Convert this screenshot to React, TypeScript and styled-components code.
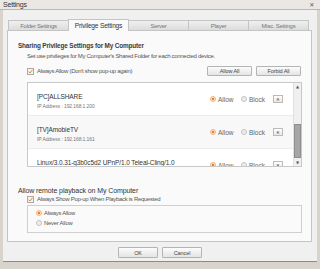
import * as React from 'react'
import styled, { createGlobalStyle } from 'styled-components'

const font = `"Liberation Sans", Arial, sans-serif`

const GlobalStyle = createGlobalStyle`
    html, body {
        margin: 0;
        padding: 0;
        background: #d9d4cb;
    }
    body {
        font-family: ${font};
        color: #444;
    }
`

interface Device {
    name: string
    ip?: string
}

const devices: Device[] = [
    { name: '[PC]ALLSHARE', ip: 'IP Address : 192.168.1.200' },
    { name: '[TV]AmobieTV', ip: 'IP Address : 192.168.1.161' },
    { name: 'Linux/3.0.31-g3b0c5d2 UPnP/1.0 Teleal-Cling/1.0' },
]

const tabs = ['Folder Settings', 'Privilege Settings', 'Server', 'Player', 'Misc. Settings']

const Window = styled.div`
    width: 320px;
    height: 269px;
    display: flex;
    flex-direction: column;
    background: #d9d4cb;
    overflow: hidden;
`

const TitleBar = styled.div`
    height: 9px;
    display: flex;
    align-items: center;
    justify-content: space-between;
    padding: 0 6px 0 3px;
    background: #ebe8e3;
    border-bottom: 1px solid #bdb7ad;
    font-size: 7px;
    letter-spacing: -0.2px;
    color: #333;
`

const Close = styled.span`
    font-family: "DejaVu Sans", sans-serif;
    font-size: 6px;
    color: #555;
`

const Frame = styled.div`
    width: 314px;
    height: 252px;
    margin-left: 3px;
    display: flex;
    flex-direction: column;
    padding: 8px 0 0 4px;
    box-sizing: border-box;
    background: #f0f0f0;
    border-bottom: 1px solid #8f8a81;
`

const TabBar = styled.div`
    display: flex;
    align-items: flex-end;
    height: 12px;
    margin-left: 1px;
`

const Tab = styled.div<{ $active?: boolean }>`
    width: 61px;
    height: ${(p) => (p.$active ? 12 : 10)}px;
    box-sizing: border-box;
    display: flex;
    align-items: center;
    justify-content: center;
    border: 1px solid #c4c4c4;
    border-bottom: none;
    margin-right: -1px;
    background: ${(p) =>
        p.$active ? '#fafafa' : 'linear-gradient(#f0f0f0, #dcdcdc)'};
    font-size: ${(p) => (p.$active ? 6.6 : 6)}px;
    letter-spacing: ${(p) => (p.$active ? -0.2 : -0.25)}px;
    color: ${(p) => (p.$active ? '#333' : '#777')};
    position: relative;
    z-index: ${(p) => (p.$active ? 1 : 0)};
    margin-bottom: ${(p) => (p.$active ? -1 : 0)}px;
`

const Panel = styled.div`
    width: 305px;
    height: 212px;
    box-sizing: border-box;
    padding: 10px 10px 0 10px;
    background: #fafafa;
    border: 1px solid #c4c4c4;
`

const Heading = styled.div`
    font-size: 6.4px;
    font-weight: bold;
    letter-spacing: -0.15px;
    color: #3a3a3a;
    line-height: 9px;
`

const SubText = styled.div`
    font-size: 6px;
    letter-spacing: -0.3px;
    line-height: 8px;
    margin: 2px 0 0 9px;
    color: #555;
`

const ActionRow = styled.div`
    display: flex;
    align-items: center;
    justify-content: space-between;
    margin: 6px 0 0 9px;
    height: 10px;
`

const CheckLabel = styled.label<{ $indent?: number }>`
    display: flex;
    align-items: center;
    gap: 3px;
    height: 8px;
    margin-left: ${(p) => p.$indent ?? 0}px;
    font-size: 6px;
    letter-spacing: -0.3px;
    color: #555;
`

const Box = styled.span`
    width: 5px;
    height: 5px;
    border: 1px solid #aaa;
    background: #f3f3f3;
    display: flex;
    align-items: center;
    justify-content: center;
`

const Buttons = styled.div`
    display: flex;
    gap: 4px;
`

const SmallButton = styled.button<{ $w: number; $h: number }>`
    width: ${(p) => p.$w}px;
    height: ${(p) => p.$h}px;
    padding: 0;
    font-family: ${font};
    font-size: 5.5px;
    letter-spacing: -0.1px;
    color: #444;
    border: 1px solid #b4b4b4;
    border-radius: 1px;
    background: linear-gradient(#fcfcfc, #e4e4e4);
`

const ListBox = styled.div`
    margin: 6px 0 0 9px;
    width: 275px;
    height: 85px;
    box-sizing: border-box;
    display: flex;
    border: 1px solid #c8c8c8;
    background: #fff;
    overflow: hidden;
`

const Rows = styled.div`
    flex: 1;
`

const Row = styled.div<{ $shade?: boolean }>`
    height: 33px;
    flex-shrink: 0;
    display: flex;
    align-items: center;
    padding-left: 9px;
    box-sizing: border-box;
    border-bottom: 1px solid #ececec;
    background: ${(p) => (p.$shade ? '#f8f8f8' : '#fff')};
`

const DeviceInfo = styled.div`
    flex: 1;
    align-self: flex-start;
    padding-top: 10px;
    display: flex;
    flex-direction: column;
    gap: 2px;
`

const DeviceName = styled.div`
    font-size: 6.5px;
    letter-spacing: -0.1px;
    line-height: 8px;
    color: #333;
    white-space: nowrap;
`

const DeviceIp = styled.div`
    font-size: 5px;
    letter-spacing: -0.1px;
    line-height: 6px;
    color: #777;
`

const Radio = styled.label<{ $w?: number }>`
    display: flex;
    align-items: center;
    gap: 2px;
    width: ${(p) => (p.$w ? `${p.$w}px` : 'auto')};
    font-size: 6.5px;
    color: #666;
`

const Dot = styled.span<{ $on?: boolean }>`
    width: 4px;
    height: 4px;
    border-radius: 50%;
    border: 1px solid ${(p) => (p.$on ? '#f2b27a' : '#c4c4c4')};
    background: ${(p) =>
        p.$on ? 'radial-gradient(#f07d20 45%, #fbe3cc 55%)' : '#ececec'};
`

const Remove = styled.span`
    width: 10px;
    height: 8px;
    margin-right: 10px;
    box-sizing: border-box;
    border: 1px solid #bbb;
    background: linear-gradient(#fff, #e8e8e8);
    display: flex;
    align-items: center;
    justify-content: center;
    font-family: "DejaVu Sans", sans-serif;
    font-size: 4.5px;
    color: #444;
`

const ScrollBar = styled.div`
    width: 7px;
    display: flex;
    flex-direction: column;
    background: #f0f0f0;
    border-left: 1px solid #e0e0e0;
`

const Arrow = styled.div`
    height: 7px;
    display: flex;
    align-items: center;
    justify-content: center;
    font-family: "DejaVu Sans", sans-serif;
    font-size: 4px;
    color: #555;
`

const Track = styled.div`
    flex: 1;
`

const Thumb = styled.div`
    margin-top: 34px;
    height: 34px;
    background: #a6a6a6;
    border: 1px solid #8e8e8e;
    box-sizing: border-box;
`

const Heading2 = styled.div`
    font-size: 7px;
    letter-spacing: -0.1px;
    line-height: 9px;
    margin-top: 19px;
    color: #333;
`

const GroupBox = styled.div`
    margin: 2px 0 0 9px;
    width: 275px;
    height: 28px;
    box-sizing: border-box;
    padding: 2px 0 0 8px;
    border: 1px solid #cfcfcf;
    display: flex;
    flex-direction: column;
`

const GroupRadio = styled(Radio)`
    height: 10px;
    font-size: 5.8px;
    letter-spacing: -0.2px;
    color: #555;
`

const Footer = styled.div`
    display: flex;
    justify-content: center;
    gap: 4px;
    padding: 5px 4px 0 0;
`

const Check = () => (
    <svg width="5" height="5" viewBox="0 0 5 5">
        <path d="M0.6 2.6 L2 4 L4.5 0.8" fill="none" stroke="#e88a2c" strokeWidth="1" />
    </svg>
)

const App: React.FC = () => (
    <Window>
        <GlobalStyle />
        <TitleBar>
            <span>Settings</span>
            <Close>✕</Close>
        </TitleBar>
        <Frame>
            <TabBar>
                {tabs.map((t) => (
                    <Tab key={t} $active={t === 'Privilege Settings'}>
                        {t}
                    </Tab>
                ))}
            </TabBar>
            <Panel>
                <Heading>Sharing Privilege Settings for My Computer</Heading>
                <SubText>
                    Set use privileges for My Computer's Shared Folder for each connected device.
                </SubText>
                <ActionRow>
                    <CheckLabel>
                        <Box>
                            <Check />
                        </Box>
                        Always Allow (Don't show pop-up again)
                    </CheckLabel>
                    <Buttons>
                        <SmallButton $w={45} $h={10}>Allow All</SmallButton>
                        <SmallButton $w={45} $h={10}>Forbid All</SmallButton>
                    </Buttons>
                </ActionRow>
                <ListBox>
                    <Rows>
                        {devices.map((d, i) => (
                            <Row key={d.name} $shade={i === 1}>
                                <DeviceInfo>
                                    <DeviceName>{d.name}</DeviceName>
                                    {d.ip && <DeviceIp>{d.ip}</DeviceIp>}
                                </DeviceInfo>
                                <Radio $w={31}>
                                    <Dot $on />
                                    Allow
                                </Radio>
                                <Radio $w={32}>
                                    <Dot />
                                    Block
                                </Radio>
                                <Remove>✕</Remove>
                            </Row>
                        ))}
                    </Rows>
                    <ScrollBar>
                        <Arrow>▲</Arrow>
                        <Thumb />
                        <Track />
                        <Arrow>▼</Arrow>
                    </ScrollBar>
                </ListBox>
                <Heading2>Allow remote playback on My Computer</Heading2>
                <CheckLabel $indent={9}>
                    <Box>
                        <Check />
                    </Box>
                    Always Show Pop-up When Playback is Requested
                </CheckLabel>
                <GroupBox>
                    <GroupRadio>
                        <Dot $on />
                        Always Allow
                    </GroupRadio>
                    <GroupRadio>
                        <Dot />
                        Never Allow
                    </GroupRadio>
                </GroupBox>
            </Panel>
            <Footer>
                <SmallButton $w={40} $h={11}>OK</SmallButton>
                <SmallButton $w={40} $h={11}>Cancel</SmallButton>
            </Footer>
        </Frame>
    </Window>
)

export default App
